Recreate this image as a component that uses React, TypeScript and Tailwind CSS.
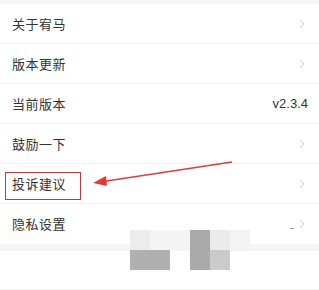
import { ChevronRight } from "lucide-react";

const rows: { label: string; value?: string }[] = [
  { label: "关于宥马" },
  { label: "版本更新" },
  { label: "当前版本", value: "v2.3.4" },
  { label: "鼓励一下" },
  { label: "投诉建议" },
  { label: "隐私设置" },
];

// pixelated blur over the bottom of the screenshot, 6 x 2 cells of 20px
const mosaic = [
  "bg-[#ececec]", "bg-[#f4f4f4]", "bg-[#f4f4f4]", "bg-[#aaaaaa]", "bg-[#ebebeb]", "bg-[#f3f3f3]",
  "bg-[#b0b0b0]", "bg-[#b0b0b0]", "bg-transparent", "bg-[#aaaaaa]", "bg-[#cbcbcb]", "bg-transparent",
];

export default function App() {
  return (
    <div
      className="relative w-[319px] h-[290px] bg-white overflow-hidden border-b border-[#f2f2f2]"
      style={{ fontFamily: '"Noto Sans CJK SC", "Noto Sans", sans-serif' }}
    >
      <div className="h-[4px] bg-[#f5f5f5]" />
      <div>
        {rows.map((row, i) => (
          <div
            key={row.label}
            className={`flex items-center justify-between h-[40px] pl-[12px] pr-[10px] ${
              i < rows.length - 1 ? "border-b border-[#f4f4f4]" : ""
            }`}
          >
            <span className="text-[13px] text-[#333] tracking-[0.5px]">{row.label}</span>
            {row.value ? (
              <span
                className="text-[13px] text-[#333] pr-[1px]"
                style={{ fontFamily: '"Liberation Sans", Arial, sans-serif' }}
              >
                {row.value}
              </span>
            ) : (
              <div className="flex items-center gap-[1px]">
                {i === rows.length - 1 && <div className="w-[4px] h-[1px] mt-[8px] bg-[#999]" />}
                <ChevronRight size={14} strokeWidth={1} className="text-[#999]" />
              </div>
            )}
          </div>
        ))}
      </div>
      <div className="h-[7px] bg-[#f5f5f5]" />

      {/* annotation: red box + arrow */}
      <div className="absolute left-[5px] top-[172px] w-[76px] h-[28px] border border-[#d32f3a]" />
      <svg className="absolute left-0 top-0" width="319" height="290">
        <line x1="232" y1="162" x2="100" y2="182" stroke="#e53935" strokeWidth="1.3" />
        <polygon points="93,183 106,176 107,186" fill="#e53935" />
      </svg>

      {/* mosaic */}
      <div className="absolute left-[130px] top-[230px] grid grid-cols-6 w-[120px]">
        {mosaic.map((c, i) => (
          <div key={i} className={`h-[20px] ${c}`} />
        ))}
      </div>
    </div>
  );
}
